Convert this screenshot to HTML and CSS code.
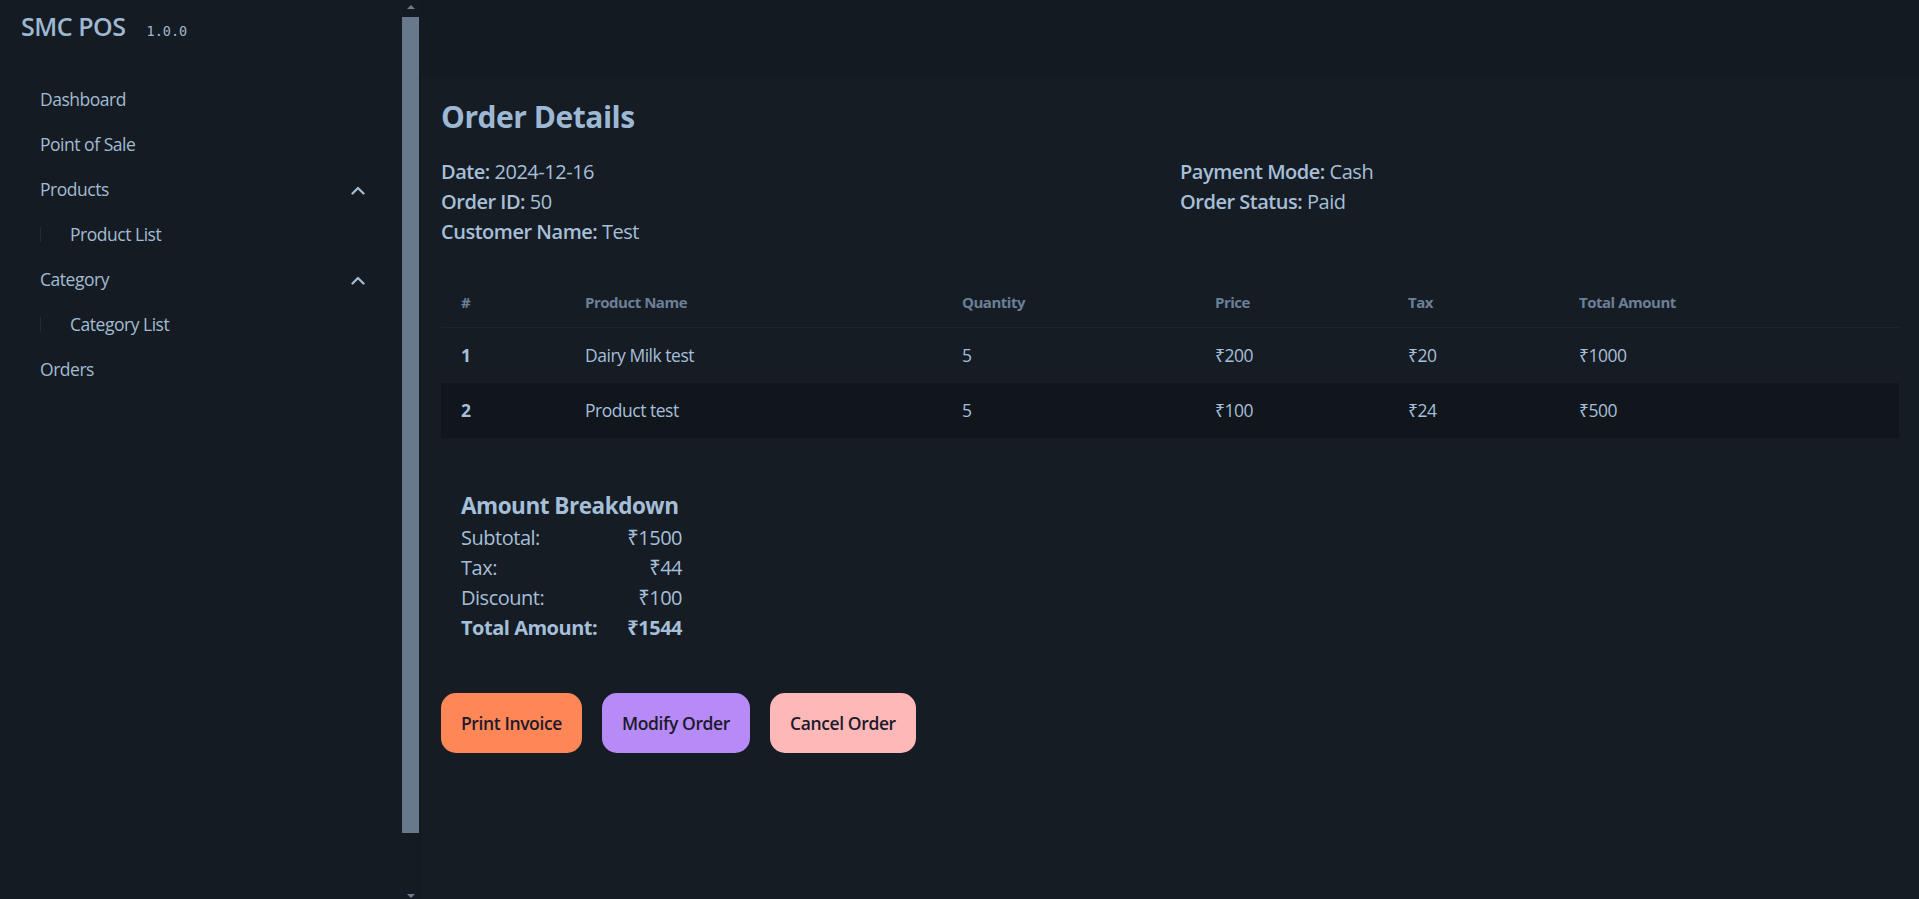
FILE: index.html
```html
<!DOCTYPE html>
<html lang="en">
<head>
<meta charset="utf-8">
<title>SMC POS - Order Details</title>
<link rel="stylesheet" href="styles.css">
</head>
<body>
<div class="app">
  <aside class="sidebar">
    <nav class="nav">
      <div class="brand">
        <span class="brand-name">SMC POS</span>
        <span class="brand-ver">1.0.0</span>
      </div>
      <ul class="menu">
        <li><a class="item">Dashboard</a></li>
        <li><a class="item">Point of Sale</a></li>
        <li>
          <a class="item">Products
            <svg class="chev" width="16" height="10" viewBox="0 0 16 10"><polyline points="2.5,8.5 8,3 13.5,8.5" fill="none" stroke="currentColor" stroke-width="2.3" stroke-linecap="round" stroke-linejoin="round"/></svg>
          </a>
          <ul class="sub">
            <li><a class="item">Product List</a></li>
          </ul>
        </li>
        <li>
          <a class="item">Category
            <svg class="chev" width="16" height="10" viewBox="0 0 16 10"><polyline points="2.5,8.5 8,3 13.5,8.5" fill="none" stroke="currentColor" stroke-width="2.3" stroke-linecap="round" stroke-linejoin="round"/></svg>
          </a>
          <ul class="sub">
            <li><a class="item">Category List</a></li>
          </ul>
        </li>
        <li><a class="item">Orders</a></li>
      </ul>
    </nav>
    <div class="scrollbar">
      <div class="sb-up"><span class="arrow-up"></span></div>
      <div class="sb-thumb"></div>
      <div class="sb-down"><span class="arrow-down"></span></div>
    </div>
  </aside>

  <main class="main">
    <div class="topbar"></div>
    <section class="card">
      <h1 class="title">Order Details</h1>
      <div class="info">
        <div>
          <p><b>Date:</b> 2024-12-16</p>
          <p><b>Order ID:</b> 50</p>
          <p><b>Customer Name:</b> Test</p>
        </div>
        <div>
          <p><b>Payment Mode:</b> Cash</p>
          <p><b>Order Status:</b> Paid</p>
        </div>
      </div>

      <table class="items">
        <colgroup>
          <col class="c-num"><col class="c-name"><col class="c-qty"><col class="c-price"><col class="c-tax"><col class="c-total">
        </colgroup>
        <thead>
          <tr><th>#</th><th>Product Name</th><th>Quantity</th><th>Price</th><th>Tax</th><th>Total Amount</th></tr>
        </thead>
        <tbody>
          <tr><th>1</th><td>Dairy Milk test</td><td>5</td><td>₹200</td><td>₹20</td><td>₹1000</td></tr>
          <tr><th>2</th><td>Product test</td><td>5</td><td>₹100</td><td>₹24</td><td>₹500</td></tr>
        </tbody>
      </table>

      <div class="breakdown">
        <h2 class="bd-title">Amount Breakdown</h2>
        <div class="bd-grid">
          <span>Subtotal:</span><span class="v">₹1500</span>
          <span>Tax:</span><span class="v">₹44</span>
          <span>Discount:</span><span class="v">₹100</span>
          <span class="total">Total Amount:</span><span class="v total">₹1544</span>
        </div>
      </div>

      <div class="actions">
        <button class="btn btn-print">Print Invoice</button>
        <button class="btn btn-modify">Modify Order</button>
        <button class="btn btn-cancel">Cancel Order</button>
      </div>
    </section>
  </main>
</div>
</body>
</html>
```

FILE: styles.css
```css
* { box-sizing: border-box; }
html, body { margin: 0; height: 100%; }
body {
  background: #141a21;
  color: #a6bfd9;
  font-family: "Open Sans", "Noto Sans", "DejaVu Sans", sans-serif;
  letter-spacing: -0.03em;
  overflow: hidden;
}
.app { display: flex; height: 899px; }

/* Sidebar */
.sidebar { display: flex; width: 419px; flex: none; background: #151b22; }
.nav { width: 402px; padding: 9px 17px 0 20px; }
.brand { display: flex; align-items: baseline; gap: 21px; height: 35px; line-height: 35px; padding-left: 1px; color: #9fb8d2; }
.brand-name { font-size: 25px; font-weight: 600; }
.brand-ver { font-family: "DejaVu Sans Mono", "Liberation Mono", monospace; font-size: 13.5px; letter-spacing: 0; }
.menu { list-style: none; margin: 33px 0 0; padding: 0; }
.menu li { list-style: none; }
.item {
  display: flex; justify-content: space-between; align-items: center;
  padding: 10px 20px; font-size: 17.5px; line-height: 25px; color: #a3bbd3;
}
.chev { display: block; margin-right: -1px; }
.sub { margin: 0 0 0 20px; padding: 0 0 0 10px; position: relative; }
.sub::before {
  content: ""; position: absolute; left: 0; top: 15px; bottom: 15px; width: 1px;
  background: rgba(166, 191, 217, 0.1);
}

/* fake scrollbar */
.scrollbar { width: 17px; display: flex; flex-direction: column; }
.sb-up { height: 14px; display: flex; align-items: center; justify-content: center; }
.arrow-up { width: 0; height: 0; border-left: 4.5px solid transparent; border-right: 4.5px solid transparent; border-bottom: 4px solid #6b7d8f; }
.sb-thumb { height: 816px; margin-top: 3px; background: #68798b; }
.sb-down { margin-top: auto; height: 10px; padding-top: 5px; display: flex; justify-content: center; align-items: flex-start; }
.arrow-down { width: 0; height: 0; border-left: 4.5px solid transparent; border-right: 4.5px solid transparent; border-top: 4px solid #6b7d8f; }

/* Main */
.main { flex: 1; display: flex; flex-direction: column; min-width: 0; }
.topbar { height: 76px; flex: none; }
.card { flex: 1; margin-left: 2px; padding: 21px 20px 20px; background: #161c24; }
.title { margin: 0 0 20px; font-size: 30px; line-height: 40px; font-weight: 700; color: #9db8d5; }
.info { display: grid; grid-template-columns: 1fr 1fr; column-gap: 20px; font-size: 20px; line-height: 30px; }
.info p { margin: 0; }
.info b { font-weight: 600; }

/* Table */
.items { width: 100%; margin-top: 30px; border-collapse: collapse; table-layout: fixed; }
.c-num { width: 124px; }
.c-name { width: 377px; }
.c-qty { width: 253px; }
.c-price { width: 193px; }
.c-tax { width: 171px; }
.c-total { width: auto; }
.items th, .items td { text-align: left; padding: 15px 20px; }
.items thead th {
  font-size: 15px; line-height: 20px; font-weight: 700; color: #6b8097;
  border-bottom: 1px solid #1d242d;
}
.items tbody th, .items tbody td { font-size: 17.5px; line-height: 25px; }
.items tbody th { font-weight: 700; }
.items tbody td { font-weight: 400; }
.items tbody tr:nth-child(2) { background: #10161c; }

/* Breakdown */
.breakdown { margin-top: 30px; padding: 20px; }
.bd-title { margin: 0; font-size: 22.5px; line-height: 35px; font-weight: 700; }
.bd-grid { display: inline-grid; grid-template-columns: auto auto; column-gap: 30px; font-size: 20px; line-height: 30px; }
.bd-grid .v { text-align: right; }
.bd-grid .total { font-weight: 700; }

/* Buttons */
.actions { display: flex; gap: 20px; margin-top: 30px; }
.btn {
  height: 60px; padding: 0 20px; border: none; border-radius: 15px;
  font-family: "Open Sans", "Noto Sans", sans-serif; font-size: 17.5px; font-weight: 600;
  letter-spacing: -0.022em;
  color: #1c1a2b;
}
.btn-print { background: #ff8657; }
.btn-modify { background: #b68af7; }
.btn-cancel { background: #ffb8b8; }
```
